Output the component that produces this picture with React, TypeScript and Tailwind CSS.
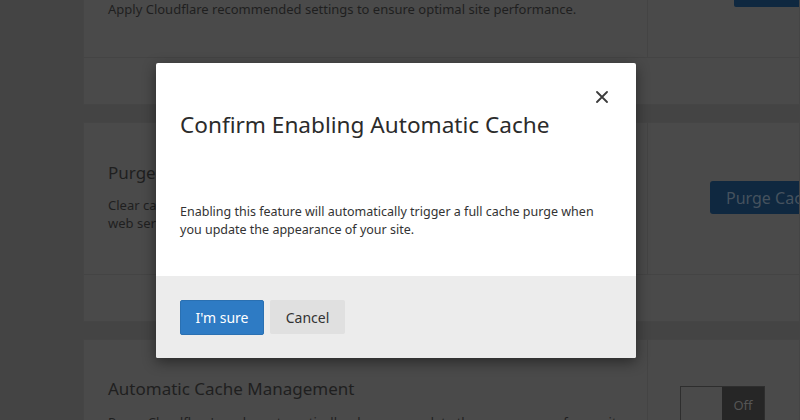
import React from "react";

function Card({
  height,
  children,
  right,
  footer = true,
}: {
  height: number;
  children?: React.ReactNode;
  right?: React.ReactNode;
  footer?: boolean;
}) {
  return (
    <div className="bg-[#4a4a4a] border border-[#454545]">
      <div className="flex" style={{ height }}>
        <div className="w-[563px] shrink-0 pl-6 pr-4 overflow-hidden">{children}</div>
        <div className="flex-1 min-w-0 border-l border-[#444444] overflow-hidden">{right}</div>
      </div>
      {footer && <div className="h-[47px] border-t border-[#444444]" />}
    </div>
  );
}

export default function App() {
  return (
    <div
      className="relative w-[800px] h-[420px] overflow-hidden bg-[#444444]"
      style={{ fontFamily: '"Noto Sans", "Open Sans", sans-serif' }}
    >
      <div className="pl-[83px] flex flex-col gap-[17px] -mt-[60px]">
        <Card
          height={116}
          right={
            <div className="pl-[86px] pt-[30px]">
              <div className="w-[90px] h-9 bg-[#0f2840] rounded-[2px]" />
            </div>
          }
        >
          <div className="pt-[59px] text-[13px] leading-[18px] text-[#1f1f1f] whitespace-nowrap">
            Apply Cloudflare recommended settings to ensure optimal site performance.
          </div>
        </Card>
        <Card
          height={151}
          right={
            <div className="pl-[62px] pt-[58px]">
              <div className="h-[33px] w-[120px] bg-[#0f2840] rounded-[3px] pl-4 flex items-center text-[16px] text-[#45525e] whitespace-nowrap">
                Purge Cache
              </div>
            </div>
          }
        >
          <div className="pt-[38px] text-[17px] leading-6 text-[#1f1f1f]">Purge Cache</div>
          <div className="pt-[11px] text-[13px] leading-[18px] text-[#1f1f1f]">
            Clear cached files to force Cloudflare to fetch a fresh version of those files from your
            web server.
          </div>
        </Card>
        <Card
          height={120}
          footer={false}
          right={
            <div className="pl-[32px] pt-[46px]">
              <div className="flex h-[40px] w-[85px] border border-[#2e2e2e]">
                <div className="w-[41px] bg-[#4a4a4a]" />
                <div className="flex-1 bg-[#262626] flex items-center justify-center text-[13px] text-[#555555]">
                  Off
                </div>
              </div>
            </div>
          }
        >
          <div className="pt-[37px] text-[17px] leading-6 text-[#1f1f1f]">
            Automatic Cache Management
          </div>
          <div className="pt-[12px] text-[13px] leading-[18px] text-[#1f1f1f]">
            Purge Cloudflare's cache automatically when you update the appearance of your site.
          </div>
        </Card>
      </div>

      <div className="absolute left-[156px] top-[63px] w-[480px] h-[295px] bg-white rounded-[2px] shadow-[0_4px_14px_rgba(0,0,0,0.45)] flex flex-col overflow-hidden">
        <div className="flex-1 relative px-6">
          <button className="absolute right-[26px] top-[26px] w-4 h-4 flex items-center justify-center text-[#444]">
            <svg width="12" height="12" viewBox="0 0 12 12">
              <path d="M1 1 L11 11 M11 1 L1 11" stroke="#3c3c3c" strokeWidth="1.8" strokeLinecap="round" />
            </svg>
          </button>
          <div className="pt-[47px] text-[22.6px] leading-[30px] text-[#2b2b2b]">
            Confirm Enabling Automatic Cache
          </div>
          <div className="pt-[63px] text-[12.5px] leading-[18px] text-[#333333] pr-2">
            Enabling this feature will automatically trigger a full cache purge when you update the
            appearance of your site.
          </div>
        </div>
        <div className="h-[82px] bg-[#ececec] px-6 pt-6 flex gap-[6px] items-start">
          <button className="h-[35px] w-[84px] bg-[#2e7bc4] border border-[#2a70b2] rounded-[2px] text-white text-[14px]">
            I'm sure
          </button>
          <button className="h-[34px] w-[75px] bg-[#e0e0e0] rounded-[2px] text-[#333] text-[14px]">
            Cancel
          </button>
        </div>
      </div>
    </div>
  );
}
